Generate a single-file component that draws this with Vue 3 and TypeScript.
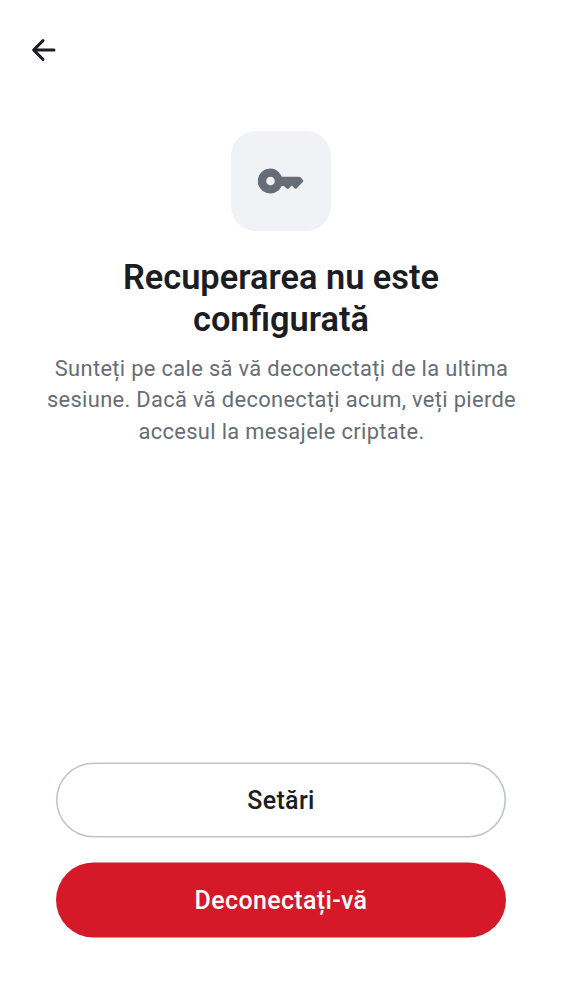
<script setup lang="ts">
const title: string[] = ['Recuperarea nu este', 'configurată']
const message: string[] = [
  'Sunteți pe cale să vă deconectați de la ultima',
  'sesiune. Dacă vă deconectați acum, veți pierde',
  'accesul la mesajele criptate.',
]
</script>

<template>
  <main class="screen">
    <header class="bar">
      <button class="back" aria-label="Înapoi">
        <svg viewBox="0 0 30 28" width="30" height="28"><path d="M15 4.6 5.6 14l9.4 9.4M6 14H26" /></svg>
      </button>
    </header>
    <section class="content">
      <div class="tile">
        <svg viewBox="0 0 50 50" width="50" height="50"><path fill-rule="evenodd" d="M14.4 12.5c4.9 0 9.4 3.4 11.4 8.2h17.1c.6 0 1.1.2 1.5.6l2.4 2.5c.6.6.6 1.4 0 2.1l-6 6.4c-.6.7-1.5.7-2.1.1l-2.9-3-3 3.1c-.6.6-1.4.6-2 0l-3-2.6h-2.1A12.5 12.5 0 1 1 14.4 12.5Zm.1 8.2a4.3 4.3 0 1 0 0 8.6 4.3 4.3 0 0 0 0-8.6Z" /></svg>
      </div>
      <h1><span v-for="line in title" :key="line">{{ line }}</span></h1>
      <p><span v-for="line in message" :key="line">{{ line }}</span></p>
    </section>
    <footer class="actions">
      <button class="secondary">
        <svg class="pill" viewBox="0 0 450 76"><rect x=".78" y="1.28" width="448.44" height="73.44" rx="36.72" /></svg>
        <span>Setări</span>
      </button>
      <button class="primary">
        <svg class="pill" viewBox="0 0 450 76"><rect x="0" y=".5" width="450" height="75" rx="37.5" /></svg>
        <span>Deconectați-vă</span>
      </button>
    </footer>
  </main>
</template>

<style scoped>
.screen { box-sizing: border-box; height: 1000px; display: flex; flex-direction: column; background: #fff; font-family: Roboto, sans-serif; color: #1b1d22; padding-bottom: 62px; }
.bar { height: 100px; box-sizing: border-box; padding: 36px 0 0 28px; }
.back { display: block; border: 0; padding: 0; background: none; width: 30px; height: 28px; color: #1b1d22; }
svg { display: block; fill: currentColor; }
.back svg { fill: none; stroke: currentColor; stroke-width: 3; stroke-linecap: round; stroke-linejoin: round; }
.content { flex: 1; display: flex; flex-direction: column; align-items: center; padding-top: 31px; text-align: center; }
.tile { width: 100px; height: 100px; border-radius: 25px; background: #f0f2f5; color: #656d77; display: grid; place-items: center; }
h1, p { margin: 0; white-space: nowrap; }
h1 span, p span { display: block; }
h1 { margin-top: 25px; font-size: 34.375px; line-height: 42.2px; font-weight: 600; }
p { margin-top: 12.6px; padding-left: 1px; font-size: 21.875px; line-height: 31.25px; letter-spacing: .34px; color: #656d77; }
.actions { display: flex; flex-direction: column; gap: 24px; padding: 0 56px; }
.actions button { display: grid; place-items: center; box-sizing: border-box; height: 76px; padding: 0; border: 0; background: none; font: 500 25px/32px Roboto, sans-serif; letter-spacing: .34px; }
.actions button > * { grid-area: 1 / 1; }
.actions span { padding-top: 1px; }
.pill { width: 450px; height: 76px; }
.secondary { color: #1b1d22; }
.secondary .pill { fill: #fff; stroke: #bdc3cc; stroke-width: 1.56px; }
.primary { color: #fff; }
.primary .pill { fill: #d51928; }
</style>

<style>
body { margin: 0; background: #fff; }
</style>
